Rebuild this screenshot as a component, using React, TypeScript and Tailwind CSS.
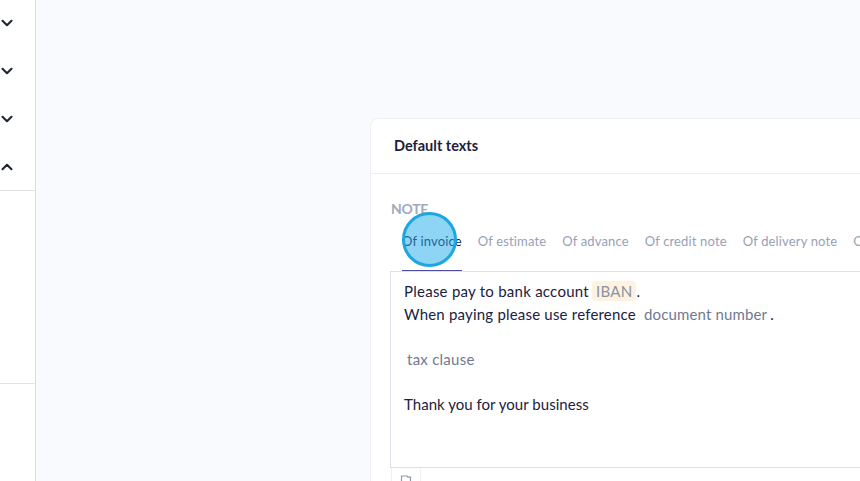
import { ChevronDown, ChevronUp } from "lucide-react";

const tabs = ["Of estimate", "Of advance", "Of credit note", "Of delivery note", "Of order"];

function SidebarRow({ open }: { open?: boolean }) {
  const Icon = open ? ChevronUp : ChevronDown;
  return (
    <div className="h-12 flex items-center pt-[1px]">
      <Icon className="w-[18px] h-[18px] -ml-[2px] text-[#1f2433]" strokeWidth={2.75} />
    </div>
  );
}

export default function App() {
  return (
    <div className="relative w-[860px] h-[481px] overflow-hidden flex bg-[#f9fafd] font-['Lato','Liberation_Sans',sans-serif]">
      {/* Sidebar */}
      <aside className="w-9 shrink-0 bg-white border-r border-[#dcdcdf] flex flex-col">
        <div className="flex flex-col -mt-[2px]">
          <SidebarRow />
          <SidebarRow />
          <SidebarRow />
          <SidebarRow open />
        </div>
        <div className="h-[194px] border-t border-b border-[#e2e2e5]" />
      </aside>

      {/* Main */}
      <main className="flex-1 pl-[334px] pt-[118px] min-w-0">
        <div className="w-[700px] h-[500px] bg-white rounded-tl-lg border border-[#eef0f5]">
          <div className="h-[55px] flex items-center pl-[23px] border-b border-[#eceef2]">
            <h2 className="text-[14.5px] font-bold text-[#1b2140]">Default texts</h2>
          </div>

          <div className="pl-[19px] pt-[26px]">
            <div className="ml-px text-[14px] leading-[18px] font-bold tracking-[-0.3px] text-[#a0a9bd]">NOTE</div>

            <div className="flex mt-[5px] pl-3 gap-4 h-[48px] text-[13px] tracking-[0.15px] text-[#97a1b5]">
              <div className="h-[48px] pt-[9px] text-[#1b2140] border-b border-[#4f4d9e]">Of invoice</div>
              {tabs.map((t) => (
                <div key={t} className="pt-[9px] whitespace-nowrap">
                  {t}
                </div>
              ))}
            </div>

            <div className="h-[197px] border border-[#dcdfe8] pl-[13px] pt-[8px] text-[15px] leading-[22.5px] text-[#1b2140]">
              <div className="whitespace-nowrap tracking-[0.25px]">
                Please pay to bank account{" "}
                <span className="-ml-[1px] px-[4px] py-[1px] bg-[#fdf3e0] text-[#8a92a5] rounded-sm">IBAN</span>.
              </div>
              <div className="whitespace-nowrap tracking-[0.2px]">
                When paying please use reference{" "}
                <span className="ml-[1px] px-[3px] tracking-[0.15px] text-[#6f7a92]">document number</span>.
              </div>
              <div className="h-[22.5px]" />
              <div className="pl-[3px] tracking-[0.25px] text-[#6f7a92]">tax clause</div>
              <div className="h-[22.5px]" />
              <div className="tracking-[0.03px]">Thank you for your business</div>
            </div>

            <div className="ml-px w-[30px] h-[30px] border-x border-[#eef0f4] flex justify-center pt-[7px]">
              <svg width="12" height="12" viewBox="0 0 12 12" fill="none" stroke="#8d97ad" strokeWidth="1.2">
                <path d="M1.5 1 H7 L8 2.2 H10.5 V11 H1.5 Z" />
              </svg>
            </div>
          </div>
        </div>
      </main>

      {/* Click highlight */}
      <div className="absolute left-[402px] top-[212px] w-[55px] h-[55px] rounded-full bg-[#1eaaeb]/50 border-[3px] border-[#1ea6e2]" />
    </div>
  );
}
